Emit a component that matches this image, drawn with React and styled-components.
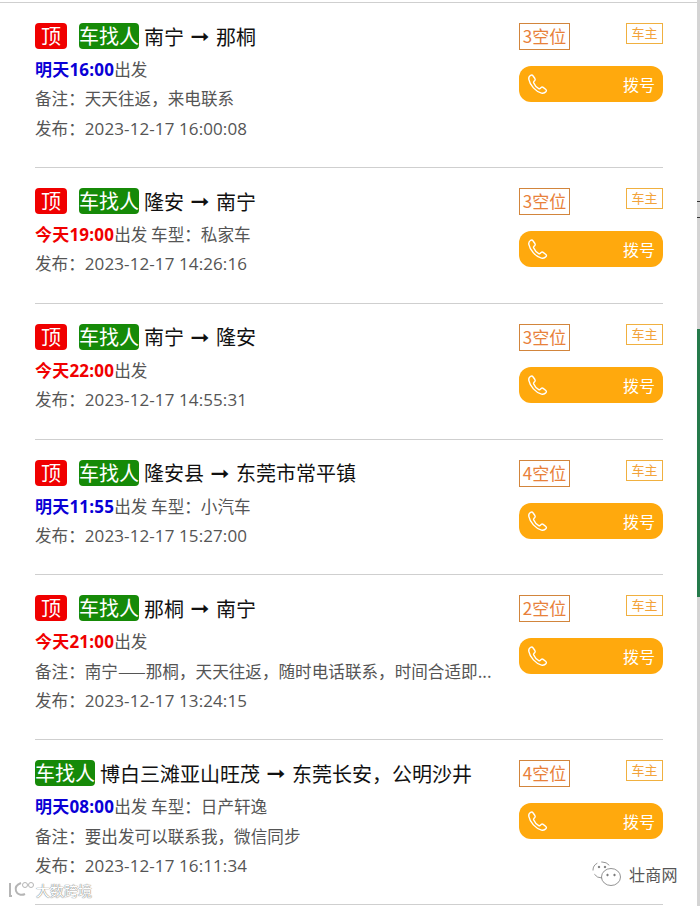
import React from 'react';
import styled, { createGlobalStyle } from 'styled-components';

const GlobalStyle = createGlobalStyle`
  html, body {
    margin: 0;
    padding: 0;
    background: #fff;
  }
  body {
    font-family: "Noto Sans CJK SC", sans-serif;
  }
`

const Page = styled.div`
  position: relative;
  width: 700px;
  height: 906px;
  overflow: hidden;
  background: #fff;
  box-sizing: border-box;
  padding-top: 2px;
`

const TopRule = styled.div`
  height: 1px;
  background: #cfcfcf;
`

const SideStrip = styled.div`
  position: absolute;
  top: 0;
  right: 0;
  bottom: 0;
  width: 3px;
  background: linear-gradient(
    to bottom,
    #d4d4d4 0, #d4d4d4 201px,
    #333 201px, #333 202px,
    #d4d4d4 202px, #d4d4d4 217px,
    #333 217px, #333 218px,
    #d4d4d4 218px, #d4d4d4 329px,
    #257a4b 329px, #257a4b 597px,
    #d4d4d4 597px
  );
`

const List = styled.div`
  width: 628px;
  margin-left: 35px;
`

const Row = styled.div`
  display: flex;
  justify-content: space-between;
  box-sizing: border-box;
  padding: 17px 0 24.25px;
  border-bottom: 1px solid #cfcfcf;
`

const Info = styled.div`
  width: 470px;
  display: flex;
  flex-direction: column;
`

const TitleLine = styled.div`
  display: flex;
  align-items: center;
  height: 32px;
  margin-bottom: 3px;
  font-size: 20px;
  color: #111;
  white-space: nowrap;
`

const Tag = styled.span`
  display: inline-block;
  height: 26px;
  line-height: 26px;
  border-radius: 4px;
  color: #fff;
  text-align: center;
  background: ${props => props.$color};
  width: ${props => props.$width}px;
  margin-right: ${props => props.$gap}px;
`

const Arrow = styled.span`
  display: inline-block;
  width: 20px;
  margin: 0 6px;
  text-align: center;
  font-family: "DejaVu Sans", sans-serif;
  font-size: 20px;
  transform: scaleX(1.15);
`

const Meta = styled.div`
  height: 29.25px;
  line-height: 29.25px;
  font-size: 16.6px;
  color: #555;
  white-space: nowrap;
`

const When = styled.b`
  color: ${props => props.$color};
  font-family: "Open Sans", "Noto Sans CJK SC", sans-serif;
  font-size: 17px;
  letter-spacing: 0.2px;
  font-weight: 700;
`

const Stamp = styled.span`
  font-family: "Open Sans", sans-serif;
  font-size: 17px;
  letter-spacing: 0.1px;
`

const Side = styled.div`
  width: 144px;
  padding-top: 3px;
`

const TagRow = styled.div`
  display: flex;
  justify-content: space-between;
  align-items: flex-start;
`

const Seats = styled.div`
  box-sizing: border-box;
  width: 51px;
  height: 27px;
  line-height: 24px;
  border: 1px solid #d2853c;
  color: #e8813a;
  font-size: 17px;
  text-align: center;
  white-space: nowrap;
`

const Role = styled.div`
  box-sizing: border-box;
  width: 37px;
  height: 21px;
  line-height: 18px;
  border: 1px solid #f0b040;
  color: #f2a33a;
  font-size: 13px;
  text-align: center;
`

const CallButton = styled.div`
  display: flex;
  align-items: center;
  justify-content: space-between;
  box-sizing: border-box;
  height: 36px;
  margin-top: 16px;
  padding: 0 8px;
  border-radius: 12px;
  background: #ffa90d;
  color: #fff;
  font-size: 16px;
`

const Watermark = styled.div`
  position: absolute;
  display: flex;
  align-items: center;
  gap: ${props => props.$gap}px;
  left: ${props => props.$left}px;
  top: ${props => props.$top}px;
`

const FaintText = styled.span`
  font-size: 14px;
  color: #fff;
  text-shadow: 0 0 1px #777, 0 0 1px #777;
`

const BrandText = styled.span`
  font-size: 16px;
  color: #555;
  letter-spacing: 0.3px;
`

function PhoneIcon() {
  return (
    <svg width="22" height="22" viewBox="0 0 24 24" fill="none" stroke="#fff" strokeWidth="1.5" strokeLinecap="round" strokeLinejoin="round">
      <path d="M4 2.500c-1.600 1-2.400 2.400-2 4.400 1.200 6.400 7.500 13.500 13.800 15 2 .5 3.800-.2 5-1.700.6-.8.5-1.600-.2-2.200l-3-2.300c-.8-.6-1.500-.5-2.200.1l-1.100 1c-.5.4-1 .5-1.500.2-2.300-1.300-4.600-3.900-5.600-6.300-.2-.5-.1-1 .3-1.400l1-1.100c.6-.7.6-1.400.1-2.200L6.500 3c-.6-.9-1.500-1.100-2.500-.5z" />
    </svg>
  )
}

function WechatIcon() {
  return (
    <svg width="30" height="28" viewBox="0 0 30 28" fill="#fff" stroke="#666" strokeWidth="0.7">
      <ellipse cx="10" cy="10" rx="9" ry="8" strokeDasharray="9 4" />
      <ellipse cx="19" cy="17" rx="9.500" ry="8.500" />
      <circle cx="15.500" cy="15" r="0.800" fill="#666" />
      <circle cx="22.500" cy="15" r="0.800" fill="#666" />
      <circle cx="7" cy="7" r="0.800" fill="#666" />
      <circle cx="13" cy="7" r="0.800" fill="#666" />
    </svg>
  )
}

function SwirlIcon() {
  return (
    <svg width="28" height="20" viewBox="0 0 28 20" fill="none" stroke="#b5b5b5">
      <path d="M3 3v13h2" strokeWidth="2" />
      <path d="M14 3c-5 2-6 5-5 8 1 3 5 5 9 3" strokeWidth="2" />
      <circle cx="18" cy="5" r="2.500" strokeWidth="1" />
      <circle cx="24" cy="5" r="2.500" strokeWidth="1" />
    </svg>
  )
}

const BLUE = '#0a00d6'
const RED = '#f00000'

const trips = [
  { top: true, from: '南宁', to: '那桐', when: '明天16:00', color: BLUE, note: '备注：天天往返，来电联系', time: '2023-12-17 16:00:08', seats: '3空位' },
  { top: true, from: '隆安', to: '南宁', when: '今天19:00', color: RED, car: '私家车', time: '2023-12-17 14:26:16', seats: '3空位' },
  { top: true, from: '南宁', to: '隆安', when: '今天22:00', color: RED, time: '2023-12-17 14:55:31', seats: '3空位' },
  { top: true, from: '隆安县', to: '东莞市常平镇', when: '明天11:55', color: BLUE, car: '小汽车', time: '2023-12-17 15:27:00', seats: '4空位' },
  { top: true, from: '那桐', to: '南宁', when: '今天21:00', color: RED, note: '备注：南宁——那桐，天天往返，随时电话联系，时间合适即...', time: '2023-12-17 13:24:15', seats: '2空位' },
  { top: false, from: '博白三滩亚山旺茂', to: '东莞长安，公明沙井', when: '明天08:00', color: BLUE, car: '日产轩逸', note: '备注：要出发可以联系我，微信同步', time: '2023-12-17 16:11:34', seats: '4空位' },
]

function TripRow({ trip }) {
  return (
    <Row>
      <Info>
        <TitleLine>
          {trip.top && <Tag $color="#f00000" $width={32} $gap={12}>顶</Tag>}
          <Tag $color="#168a08" $width={60} $gap={5}>车找人</Tag>
          {trip.from}
          <Arrow>➞</Arrow>
          {trip.to}
        </TitleLine>
        <Meta>
          <When $color={trip.color}>{trip.when}</When>出发{trip.car && ` 车型：${trip.car}`}
        </Meta>
        {trip.note && <Meta>{trip.note}</Meta>}
        <Meta>发布：<Stamp>{trip.time}</Stamp></Meta>
      </Info>
      <Side>
        <TagRow>
          <Seats>{trip.seats}</Seats>
          <Role>车主</Role>
        </TagRow>
        <CallButton>
          <PhoneIcon />
          <span>拨号</span>
        </CallButton>
      </Side>
    </Row>
  )
}

export default function App() {
  return (
    <Page>
      <GlobalStyle />
      <TopRule />
      <List>
        {trips.map(trip => <TripRow key={trip.time} trip={trip} />)}
      </List>
      <SideStrip />
      <Watermark $left={7} $top={880} $gap={1}>
        <SwirlIcon />
        <FaintText>大数跨境</FaintText>
      </Watermark>
      <Watermark $left={592} $top={860} $gap={7}>
        <WechatIcon />
        <BrandText>壮商网</BrandText>
      </Watermark>
    </Page>
  )
}
